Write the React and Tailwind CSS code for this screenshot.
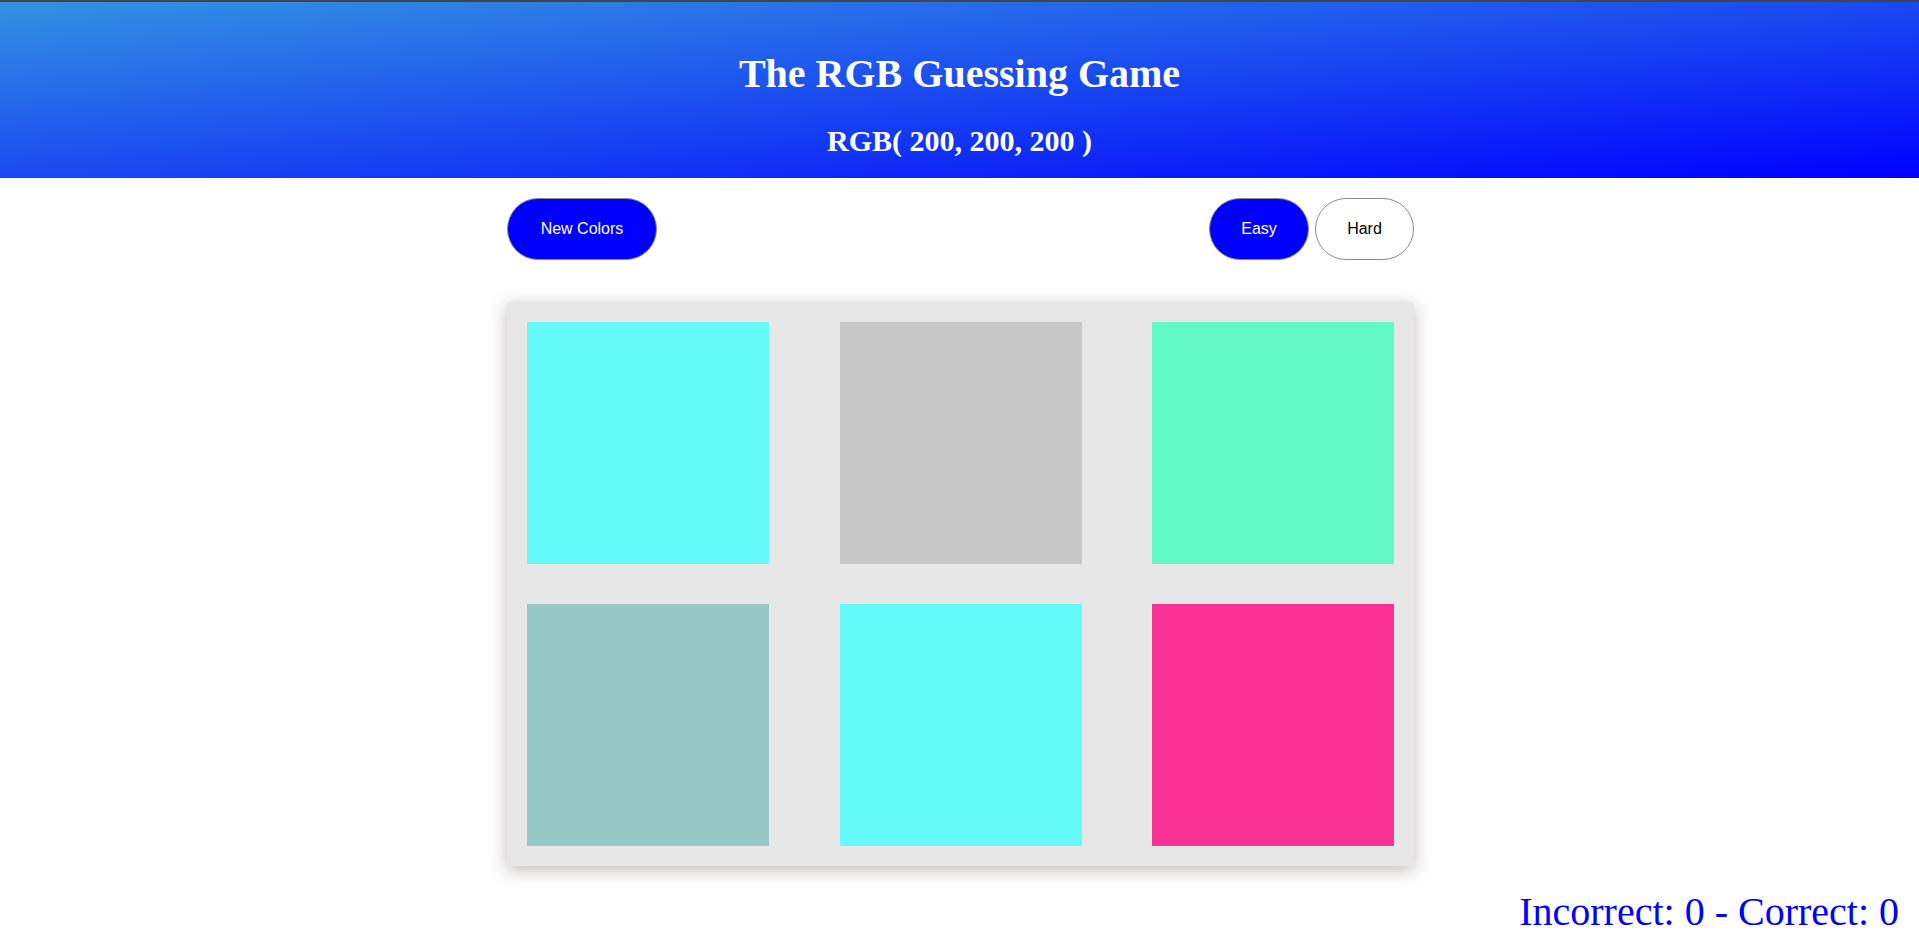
import { useState } from "react";

const easyColors = [
  "#64fafa",
  "#c8c8c8",
  "#64fac8",
  "#96c8c8",
  "#64fafa",
  "#fa3296",
];

const App = () => {
  const [mode, setMode] = useState("easy");
  const [score] = useState({ incorrect: 0, correct: 0 });

  return (
    <div className="min-h-screen bg-white font-['Liberation_Serif',serif]">
      {/* header */}
      <header className="border-t-2 border-[#444444] bg-linear-to-br/srgb from-[#3392e2] to-[#0000ff] pt-[50px] pb-[21px] text-center text-white">
        <h1 className="text-[40px] leading-[44px] font-bold">
          The RGB Guessing Game
        </h1>
        <h2 className="mt-[28px] text-[30px] leading-[33px] font-bold">
          RGB( 200, 200, 200 )
        </h2>
      </header>

      <main className="mx-auto w-[907px] translate-x-[1px]">
        <div className="mt-[20px] flex items-center justify-between font-['Liberation_Sans',Arial,sans-serif] text-[16px]">
          <button className="h-[62px] w-[150px] rounded-full border border-[#8a8a8a] bg-[#0000ff] text-white">
            New Colors
          </button>
          <div className="flex gap-[6px]">
            <button
              onClick={() => setMode("easy")}
              className={
                mode === "easy"
                  ? "h-[62px] w-[100px] rounded-full border border-[#8a8a8a] bg-[#0000ff] text-white"
                  : "h-[62px] w-[100px] rounded-full border border-[#8a8a8a] bg-white text-black"
              }
            >
              Easy
            </button>
            <button
              onClick={() => setMode("hard")}
              className={
                mode === "hard"
                  ? "h-[62px] w-[99px] rounded-full border border-[#8a8a8a] bg-[#0000ff] text-white"
                  : "h-[62px] w-[99px] rounded-full border border-[#8a8a8a] bg-white text-black"
              }
            >
              Hard
            </button>
          </div>
        </div>

        <div className="mt-[42px] grid grid-cols-[242px_242px_242px] justify-between gap-y-[40px] bg-[#e7e7e7] p-[20px] shadow-[0_4px_16px_rgba(90,60,60,0.35)]">
          {easyColors.map((c, i) => (
            <div
              key={i}
              className="h-[242px] w-[242px]"
              style={{ backgroundColor: c }}
            />
          ))}
        </div>
      </main>

      <div className="mt-[24px] flex justify-end pr-[20px] text-[40px] leading-[44px] text-[#0000ff]">
        Incorrect: {score.incorrect} - Correct: {score.correct}
      </div>
    </div>
  );
};

export default App;
